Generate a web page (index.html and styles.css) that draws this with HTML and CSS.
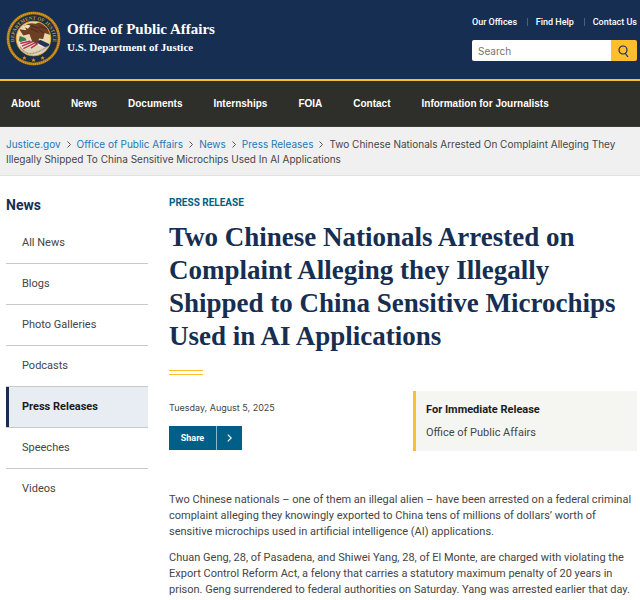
FILE: index.html
```
<!DOCTYPE html>
<html lang="en">
<head>
<meta charset="utf-8">
<title>Office of Public Affairs</title>
<link rel="stylesheet" href="styles.css">
</head>
<body>
<header class="banner">
  <div class="brand">
    <svg class="seal" viewBox="0 0 108 108" role="img" aria-label="Department of Justice seal">
      <defs>
        <path id="ring" d="M21 74 A38 38 0 1 1 87 74"/>
        <clipPath id="disc"><circle cx="54" cy="54" r="33"/></clipPath>
      </defs>
      <circle cx="54" cy="54" r="53" fill="#8a621c"/>
      <circle cx="54" cy="54" r="50" fill="none" stroke="#dc9b1d" stroke-width="4" stroke-dasharray="3 1"/>
      <circle cx="54" cy="54" r="47" fill="#192f44"/>
      <text class="seal-text" fill="#c69935"><textPath href="#ring" startOffset="50%" text-anchor="middle">DEPARTMENT OF JUSTICE</textPath></text>
      <circle cx="54" cy="54" r="35" fill="#d79c2c"/>
      <circle cx="54" cy="54" r="33" fill="#ead7aa"/>
      <g clip-path="url(#disc)">
        <path d="M19 67Q35 73 54 67T89 63V89H19Z" fill="#e0d5b9"/>
        <path d="M27 49L38 53 43 63 34 67 25 58Z" fill="#3d7655"/>
        <path d="M25 62L54 54 86 64 76 72 57 66 33 76Z" fill="#f2e5e2"/>
        <path d="M28 64L48 59M31 69L53 60M34 74L58 62M49 73L62 64" stroke="#b53749" stroke-width="3"/>
        <path d="M57 59L68 57 90 67 77 71 65 65Z" fill="#243455"/>
        <path d="M36 29Q45 22 58 25L72 20 91 32 87 47 76 43 73 55 65 54 61 66 51 59 46 45 34 48 26 36 40 38Z" fill="#6c3e24"/>
        <path d="M48 29L66 34M49 35L64 42M66 30L82 36M65 37L74 43" stroke="#4a2a1d" stroke-width="2"/>
        <path d="M35 31Q40 24 48 29L43 35Z" fill="#eee1bd"/>
        <path d="M28 71Q39 87 54 83T81 70" fill="none" stroke="#9b967f" stroke-width="3" stroke-dasharray="2 1"/>
      </g>
      <g fill="#d69b26"><path d="M54 92l1 3h3l-2 2 1 3-3-2-3 2 1-3-2-2h3Z"/><path d="M36 88l1 3h3l-2 2 1 3-3-2-3 2 1-3-2-2h3Z"/><path d="M72 88l1 3h3l-2 2 1 3-3-2-3 2 1-3-2-2h3Z"/></g>
    </svg>
    <div class="brand-text"><a class="office" href="#">Office of Public Affairs</a><a class="department" href="#">U.S. Department of Justice</a></div>
  </div>
  <div class="tools">
    <nav class="utility" aria-label="Utility"><a href="#">Our Offices</a><a href="#">Find Help</a><a href="#">Contact Us</a></nav>
    <form class="search" role="search">
      <input type="search" placeholder="Search" aria-label="Search">
      <button type="button" aria-label="Submit search"><svg viewBox="0 0 12 12"><circle cx="5" cy="5" r="4"/><path d="M7 8l3 4"/></svg></button>
    </form>
  </div>
</header>
<nav class="primary" aria-label="Primary">
  <a href="#">About</a><a href="#">News</a><a href="#">Documents</a><a href="#">Internships</a><a href="#">FOIA</a><a href="#">Contact</a><a href="#">Information for Journalists</a>
</nav>
<nav class="crumbs" aria-label="Breadcrumb">
  <a href="#">Justice.gov</a><svg viewBox="0 0 4 7"><path d="M.5.5l3 3-3 3"/></svg><a href="#">Office of Public Affairs</a><svg viewBox="0 0 4 7"><path d="M.5.5l3 3-3 3"/></svg><a href="#">News</a><svg viewBox="0 0 4 7"><path d="M.5.5l3 3-3 3"/></svg><a href="#">Press Releases</a><svg viewBox="0 0 4 7"><path d="M.5.5l3 3-3 3"/></svg><span>Two Chinese Nationals Arrested On Complaint Alleging They Illegally Shipped To China Sensitive Microchips Used In AI Applications</span>
</nav>
<div class="page">
  <aside class="side">
    <h2>News</h2>
    <ul>
      <li><a href="#">All News</a></li>
      <li><a href="#">Blogs</a></li>
      <li><a href="#">Photo Galleries</a></li>
      <li><a href="#">Podcasts</a></li>
      <li><a class="current" href="#" aria-current="page">Press Releases</a></li>
      <li><a href="#">Speeches</a></li>
      <li><a href="#">Videos</a></li>
    </ul>
  </aside>
  <main>
    <p class="kicker">PRESS RELEASE</p>
    <h1>Two Chinese Nationals Arrested on Complaint Alleging they Illegally Shipped to China Sensitive Microchips Used in AI Applications</h1>
    <div class="rule"></div>
    <div class="meta">
      <div class="dateline">
        <time datetime="2025-08-05">Tuesday, August 5, 2025</time>
        <button class="share" type="button"><span>Share</span><svg viewBox="0 0 4 7"><path d="M.5.5l3 3-3 3"/></svg></button>
      </div>
      <div class="release"><strong>For Immediate Release</strong><span>Office of Public Affairs</span></div>
    </div>
    <article>
      <p>Two Chinese nationals – one of them an illegal alien – have been arrested on a federal criminal complaint alleging they knowingly exported to China tens of millions of dollars’ worth of sensitive microchips used in artificial intelligence (AI) applications.</p>
      <p>Chuan Geng, 28, of Pasadena, and Shiwei Yang, 28, of El Monte, are charged with violating the Export Control Reform Act, a felony that carries a statutory maximum penalty of 20 years in prison. Geng surrendered to federal authorities on Saturday. Yang was arrested earlier that day.</p>
    </article>
  </main>
</div>
</body>
</html>
```
FILE: styles.css
```
* { box-sizing: border-box; }
body { margin: 0; background: #fff; color: #454545; font: 11px/16px Roboto, "Liberation Sans", sans-serif; }
a { color: inherit; text-decoration: none; }
h1, h2, p, ul { margin: 0; padding: 0; }
ul { list-style: none; }
button { border: 0; padding: 0; font: inherit; }
.banner { display: flex; justify-content: space-between; padding: 11px 3px 13px 6px; background: #162e51; border-bottom: 2px solid #ffbe2e; color: #fff; }
.brand { display: flex; gap: 6px; }
.seal { width: 55px; height: 55px; }
.seal-text { font: bold 10px "Liberation Serif", serif; }
.brand-text { display: flex; flex-direction: column; padding-top: 8px; font-family: "Liberation Serif", serif; font-weight: bold; }
.office { font-size: 15px; line-height: 20px; }
.department { font-size: 11px; line-height: 16px; }
.tools { width: 165px; }
.utility { display: flex; justify-content: space-between; line-height: 22px; font-size: 9px; font-weight: 500; white-space: nowrap; }
.utility a + a::before { content: ""; display: inline-block; height: 8px; border-left: 1px solid #49617e; margin-right: 8px; vertical-align: -1px; }
.search { display: flex; margin-top: 7px; height: 21px; border-radius: 2px; overflow: hidden; }
.search input { flex: 1; min-width: 0; border: 0; border-radius: 0; padding: 0 6px; font: 10px Inter, sans-serif; background: #fff; appearance: none; }
.search input::placeholder { color: #757575; }
.search button { width: 26px; background: #ffbe2e; display: grid; place-items: center; }
.search svg { width: 12px; height: 12px; fill: none; stroke: #162e51; stroke-width: 1.2; }
.primary { display: flex; gap: 31px; padding: 0 11px; background: #2e2e2a; border-bottom: 1px solid #3d3d38; color: #fff; font-family: "Liberation Sans", sans-serif; font-size: 10px; line-height: 45px; font-weight: 700; white-space: nowrap; }
.crumbs { padding: 10px 6px 8px; background: #f0f0f0; border-bottom: 1px solid #dfe1e2; font-family: Inter, sans-serif; font-size: 10px; line-height: 15px; }
.crumbs a { color: #2378b5; }
.crumbs svg { width: 4px; height: 7px; margin: 0 6px; fill: none; stroke: #555; }
.page { display: grid; grid-template-columns: 142px 1fr; gap: 21px; padding: 19px 3px 0 6px; }
.side h2 { font-size: 14px; line-height: 20px; color: #162e51; font-weight: 700; margin-bottom: 8px; }
.side li + li { border-top: 1px solid #c9c9c9; }
.side a { display: block; padding: 12px 16px; }
.side .current { background: #e8edf4; color: #1b1b1b; font-weight: 700; border-left: 3px solid #162e51; padding-left: 13px; }
.kicker { color: #005f86; font-size: 10px; font-weight: 700; }
h1 { margin-top: 10px; color: #162e51; font: bold 27px/33px "Liberation Serif", serif; }
.rule { width: 34px; height: 5px; margin-top: 17px; border: solid #ffbe2e; border-width: 1px 0; }
.meta { display: grid; grid-template-columns: 1fr 224px; gap: 20px; margin-top: 16px; }
.dateline { padding-top: 9px; font-size: 9px; }
.dateline time { display: block; font-family: Inter, sans-serif; }
.share { display: flex; align-items: center; margin-top: 10px; height: 24px; background: #005f86; color: #fff; font-weight: 700; }
.share span { width: 48px; line-height: 24px; border-right: 1px solid #8bb6ca; }
.share svg { width: 5px; height: 8px; margin: 0 10px; fill: none; stroke: #fff; }
.release { display: flex; flex-direction: column; gap: 7px; padding: 11px 10px 10px; line-height: 16px; border-left: 3px solid #ffbe2e; background: #f5f6f2; }
.release strong { color: #1b1b1b; font-size: 11px; }
article { margin-top: 41px; }
article p { margin-bottom: 10px; }
```
